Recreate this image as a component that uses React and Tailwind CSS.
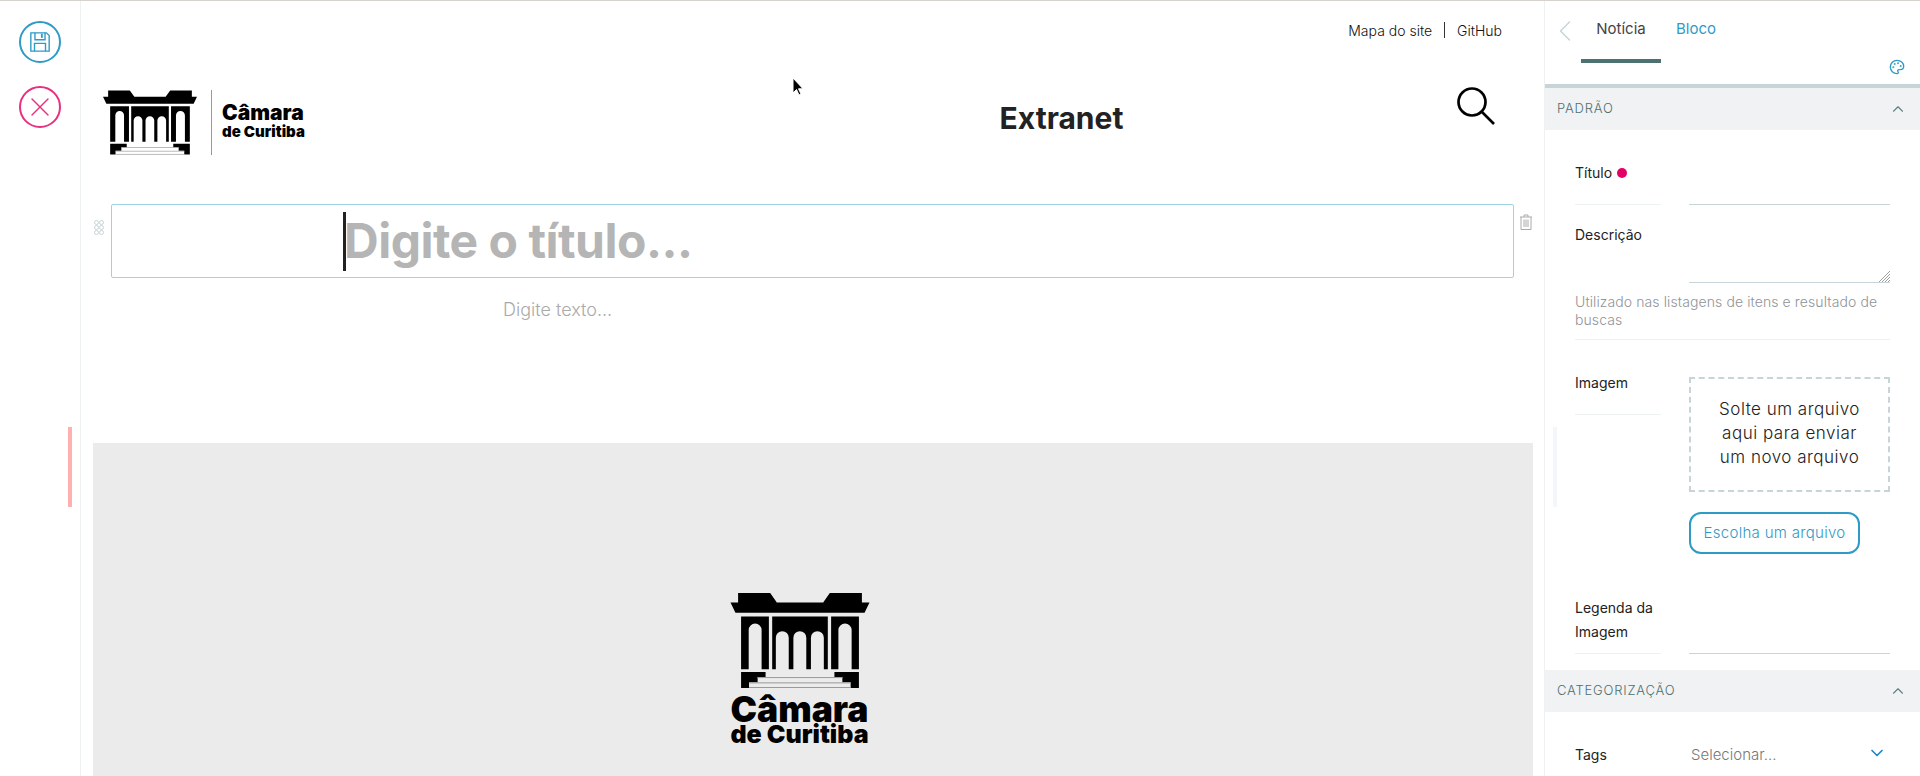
import React from 'react';
import { ChevronLeft, ChevronUp, ChevronDown, Palette, X } from 'lucide-react';

const Building = ({ className }) => (
  <svg viewBox="120 68 420 287" className={className}>
    <path fill="#000" d="M143 68H240L260 97H400L420 68H517V97H540L525 128H135L120 97H143Z" />
    <path fill="#000" fillRule="evenodd" d="M152 139H236V298H152ZM175 298H214V180A19.500 19.500 0 0 0 175 180Z" />
    <path fill="#000" fillRule="evenodd" d="M246 139H414V298H246ZM257 298H296V203A19.500 19.500 0 0 0 257 203ZM310 298H349V203A19.500 19.500 0 0 0 310 203ZM363 298H402V203A19.500 19.500 0 0 0 363 203Z" />
    <path fill="#000" fillRule="evenodd" d="M424 139H508V298H424ZM446 298H486V180A20 20 0 0 0 446 180Z" />
    <path fill="#000" d="M152 307H226V322H202V338H176V355H152Z" />
    <path fill="#000" d="M508 307H434V322H458V338H483V355H508Z" />
    <rect x="202" y="322" width="256" height="3" fill="#999" />
    <rect x="176" y="338" width="307" height="3" fill="#999" />
    <rect x="176" y="352" width="307" height="3" fill="#999" />
  </svg>
);

const SectionHeader = ({ children }) => (
  <div className="flex h-[42px] items-center justify-between bg-[#f0f2f4] pl-3 pr-[13px]">
    <span className="text-[13px] font-light tracking-[0.8px] text-[#4d7070]">{children}</span>
    <ChevronUp className="h-[18px] w-[18px] text-[#5f8080]" strokeWidth={1.5} />
  </div>
);

const Field = ({ label, dot, labelClass, children }) => (
  <div className="flex gap-7 px-[30px]">
    <div className={`w-[86px] shrink-0 border-b border-[#edf1f2] text-[14px] leading-6 text-[#222] ${labelClass}`}>
      {label}
      {dot && <span className="ml-[5px] inline-block h-[10px] w-[10px] rounded-full bg-[#e40166]" />}
    </div>
    {children}
  </div>
);

const Sidebar = () => (
  <aside className="w-[376px] shrink-0 overflow-hidden border-l border-[#edf1f2]">
    <div className="h-[83px]">
      <div className="flex items-start">
        <ChevronLeft className="ml-[2px] mt-[12px] h-9 w-9 text-[#c7d5d8]" strokeWidth={1} />
        <div className="-ml-[2px] flex h-[62px] w-[80px] items-start justify-center border-b-4 border-[#4d7070] pt-[18px] text-[15px] leading-5 text-[#444]">
          Notícia
        </div>
        <div className="ml-[15px] pt-[18px] text-[15px] leading-5 text-[#2e9bc6]">Bloco</div>
      </div>
      <div className="-mt-[4px] flex justify-end pr-[15px]">
        <Palette className="h-4 w-4 text-[#2e9bc6]" strokeWidth={2} />
      </div>
    </div>
    <div className="h-1 bg-[#c7d5d8]" />
    <SectionHeader>PADRÃO</SectionHeader>

    <div className="pt-[31px]">
      <Field label="Título" dot labelClass="h-[44px]">
        <div className="h-[44px] flex-1 border-b border-[#c7d5d8]" />
      </Field>
    </div>

    <div className="pt-[18px]">
      <Field label="Descrição" labelClass="border-b-0 h-[60px]">
        <div className="relative h-[60px] flex-1 border-b border-[#c7d5d8]">
          <svg viewBox="0 0 11 11" className="absolute bottom-0 right-0 h-[11px] w-[11px]">
            <path d="M11 0L0 11M11 3L3 11M11 6L6 11M11 9L9 11" stroke="#888" strokeWidth="0.8" />
          </svg>
        </div>
      </Field>
      <div className="mx-[30px] border-b border-[#edf1f2] pb-[10px] pt-[10px] text-[14px] font-light leading-[18px] tracking-[0.1px] text-[#8f9498]">
        Utilizado nas listagens de itens e resultado de buscas
      </div>
    </div>

    <div className="pt-[31px]">
      <Field label="Imagem" labelClass="h-[44px]">
        <div className="flex flex-1 flex-col">
          <div className="mt-[6px] flex h-[115px] items-center justify-center border-2 border-dashed border-[#c7d5d8] pb-[3px] text-center text-[17px] font-light leading-6 tracking-[0.5px] text-[#222]">
            <span>Solte um arquivo<br />aqui para enviar<br />um novo arquivo</span>
          </div>
          <div className="mt-[20px] flex h-[42px] w-[171px] items-center justify-center rounded-xl border-2 border-[#2e9bc6] text-[15px] font-light tracking-[0.3px] text-[#2e9bc6]">
            Escolha um arquivo
          </div>
        </div>
      </Field>
    </div>

    <div className="pt-[42px]">
      <Field label="Legenda da Imagem" labelClass="pb-[9px]">
        <div className="flex-1 border-b border-[#c7d5d8]" />
      </Field>
    </div>

    <div className="mt-[16px]">
      <SectionHeader>CATEGORIZAÇÃO</SectionHeader>
    </div>
    <div className="flex items-center gap-7 px-[30px] pt-[31px]">
      <div className="w-[86px] text-[14px] leading-6 text-[#222]">Tags</div>
      <div className="flex flex-1 items-center justify-between pl-[2px] pr-[3px] text-[15px] font-light text-[#777]">
        Selecionar...
        <ChevronDown className="-mt-[4px] h-[20px] w-[20px] text-[#1c87c9]" strokeWidth={2} />
      </div>
    </div>
  </aside>
);

const App = () => (
  <div className="relative h-[776px] overflow-hidden border-t border-[#d6d3cc] bg-white" style={{ fontFamily: 'Inter, sans-serif' }}>
    <div className="flex h-full">
      {/* Toolbar */}
      <div className="flex w-[81px] shrink-0 flex-col items-center gap-[23px] border-r border-[#edf1f2] pt-[20px]">
        <div className="flex h-[42px] w-[42px] items-center justify-center rounded-full border-2 border-[#2e9bc6]">
          <svg viewBox="0 0 24 24" className="h-[22px] w-[22px]" fill="none" stroke="#2e9bc6" strokeWidth="1.5">
            <path d="M2 2H19L22 5V22H2Z" />
            <path d="M6.500 2V9.500H17.500V2" />
            <path d="M6 22V13.500H18V22" />
            <rect x="13" y="3" width="2" height="4.500" fill="#2e9bc6" stroke="none" />
          </svg>
        </div>
        <div className="flex h-[42px] w-[42px] items-center justify-center rounded-full border-2 border-[#e8307e]">
          <X className="h-8 w-8 text-[#e8307e]" strokeWidth={1} />
        </div>
      </div>

      {/* Main */}
      <main className="min-w-0 flex-1 overflow-hidden">
        <div className="flex h-[58px] items-center justify-end pr-[42px] text-[14px] font-light text-[#111]">
          <span>Mapa do site</span>
          <span className="mx-[12px] h-[16px] border-l border-[#333]" />
          <span>GitHub</span>
        </div>
        <div className="flex h-[100px] items-start pl-[22px] pr-[49px]">
          <div className="mt-[31px] flex items-start">
            <Building className="h-[65px] w-[94px]" />
            <div className="ml-[14px] h-[65px] border-l border-[#999]" />
            <div className="ml-[10px] mt-[13px] w-[82px] whitespace-nowrap font-black text-black">
              <div className="text-[21px] leading-[20px]">Câmara</div>
              <div className="text-[15px] leading-[17px]">de Curitiba</div>
            </div>
          </div>
          <div className="mt-[41px] flex-1 pl-[362px] text-center text-[30px] font-bold leading-9 text-[#222]">Extranet</div>
          <svg viewBox="0 0 38 38" className="mt-[28px] h-[38px] w-[38px]" fill="none" stroke="#000" strokeWidth="2.700">
            <circle cx="15" cy="15" r="13.500" />
            <path d="M24.500 24.500L37 37" />
          </svg>
        </div>

        <div className="relative mx-[30px] mt-[45px]">
          <div className="flex h-[74px] items-center rounded-[2px] border border-[#9fd3e3] pl-[231px]">
            <span className="h-[59px] w-[3px] bg-[#222]" />
            <span className="-ml-[2px] text-[48px] font-bold tracking-[-0.5px] text-[#b5b5b5]">Digite o título...</span>
          </div>
          <div className="absolute -left-[17px] top-[16px] grid grid-cols-2">
            {[0, 1, 2, 3, 4, 5].map((i) => (
              <span key={i} className="h-[5px] w-[5px] rounded-full border border-[#c7d5d8]" />
            ))}
          </div>
          <svg viewBox="0 0 14 16" className="absolute -right-[19px] top-[10px] h-4 w-[14px]" fill="none" stroke="#aaa" strokeWidth="1">
            <path d="M1 3H13M5 3V1H9V3" />
            <path d="M2 3V15.500H12V3" />
            <path d="M5 5.500V13M7 5.500V13M9 5.500V13" />
          </svg>
        </div>
        <div className="pl-[422px] pt-[20px] text-[18px] font-light leading-[24px] text-[#aaa]">
          Digite texto...
        </div>

        <div className="ml-[12px] mr-[11px] mt-[121px] flex h-[400px] flex-col items-center bg-[#ebebeb] pr-[27px] pt-[150px]">
          <Building className="h-[95px] w-[140px]" />
          <div className="mt-[10px] text-center font-black text-black">
            <div className="text-[35.500px] leading-[24px]">Câmara</div>
            <div className="text-[25px] leading-[24px]">de Curitiba</div>
          </div>
        </div>
      </main>

      <Sidebar />
    </div>

    {/* Drag hints */}
    <div className="absolute left-[68px] top-[426px] h-[80px] w-1 bg-[#ffb0b0]" />
    <div className="absolute left-[1553px] top-[426px] h-[80px] w-1 bg-[#f3f7fb]" />
    {/* Cursor */}
    <svg viewBox="0 0 12 20" className="absolute left-[792px] top-[76px] h-[20px] w-[12px]">
      <path d="M1 1V16L4.500 12.500L7 18L9 17L6.500 11.800H11Z" fill="#000" stroke="#fff" strokeWidth="1" />
    </svg>
  </div>
);

export default App;
